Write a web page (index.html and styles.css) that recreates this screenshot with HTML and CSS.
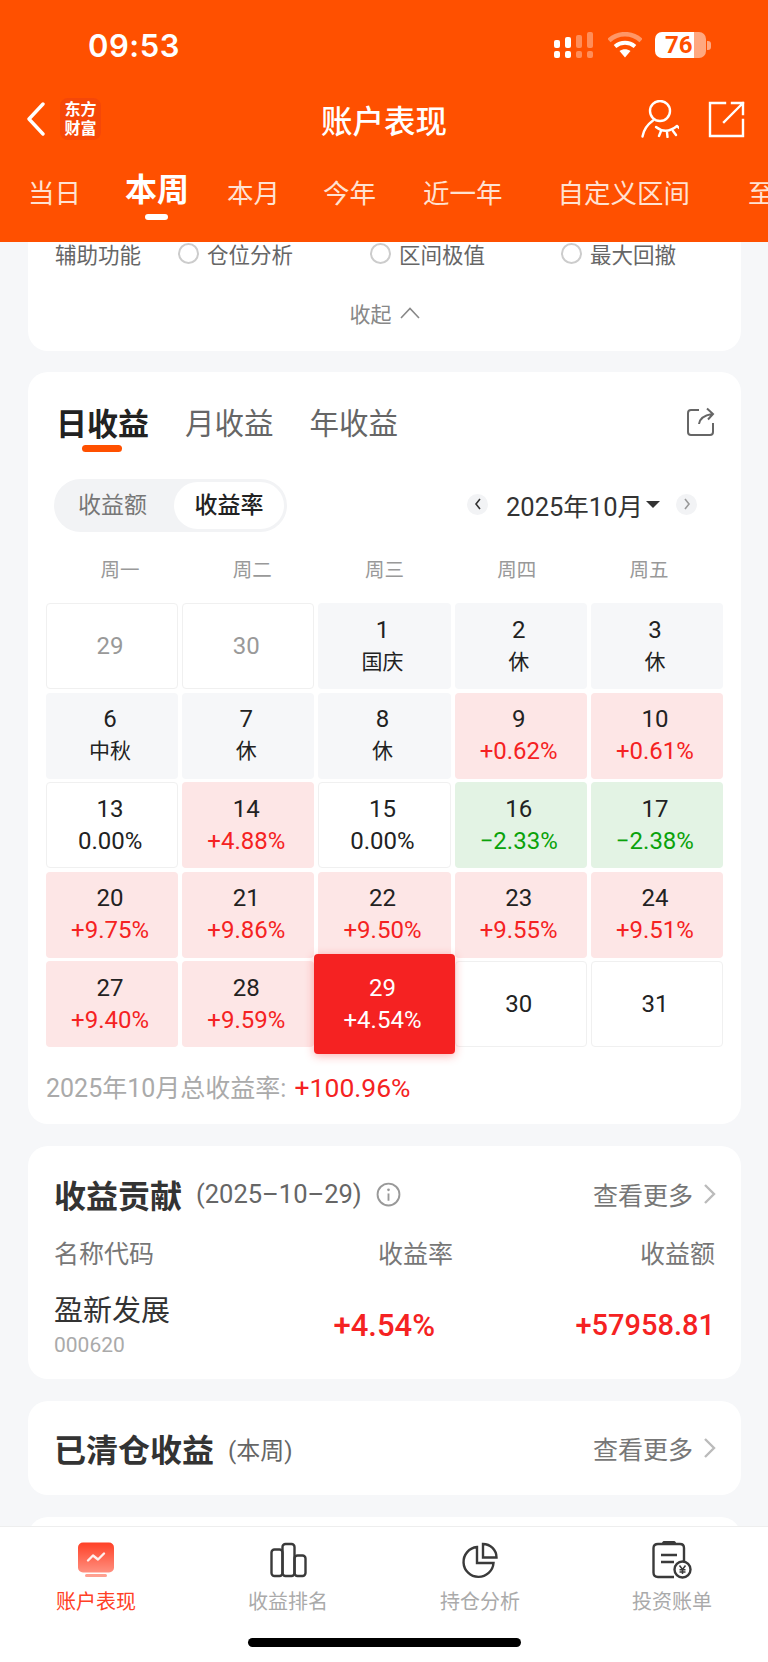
FILE: index.html
```html
<!DOCTYPE html>
<html lang="zh">
<head>
    <meta charset="UTF-8">
    <meta name="viewport" content="width=device-width, initial-scale=1.0">
    <title>账户表现</title>
    <link rel="stylesheet" href="styles.css">
</head>
<body>
<div class="phone">

    <!-- Cabeçalho -->
    <div class="header">
        <div class="status">
            <span class="time">09:53</span>
            <div class="status-icons">
                <svg width="40" height="26" viewBox="0 0 40 26">
                    <g fill="#fff">
                        <rect x="0" y="8" width="6" height="8" rx="2"/>
                        <rect x="11" y="5" width="6" height="11" rx="2"/>
                        <rect x="0" y="19" width="6" height="7" rx="2"/>
                        <rect x="11" y="19" width="6" height="7" rx="2"/>
                    </g>
                    <g fill="#fff" opacity="0.35">
                        <rect x="22" y="3" width="6" height="13" rx="2"/>
                        <rect x="33" y="0" width="6" height="16" rx="2"/>
                        <rect x="22" y="19" width="6" height="7" rx="2"/>
                        <rect x="33" y="19" width="6" height="7" rx="2"/>
                    </g>
                </svg>
                <svg class="wifi" width="34" height="26" viewBox="0 0 34 26">
                    <path d="M1 8.5C10 0 24 0 33 8.5" fill="none" stroke="#fff" stroke-opacity="0.4" stroke-width="4.5"/>
                    <path d="M7 14.5C13 9.5 21 9.5 27 14.5" fill="none" stroke="#fff" stroke-width="4"/>
                    <path d="M11.5 19C15 16.5 19 16.5 22.5 19L17 25.5Z" fill="#fff"/>
                </svg>
                <div class="battery"><div class="battery-body"><span>76</span></div><i></i></div>
            </div>
        </div>
        <div class="nav">
            <svg class="back" width="20" height="34" viewBox="0 0 20 34">
                <path d="M17 2L3 17L17 32" fill="none" stroke="#fff" stroke-width="3.4" stroke-linecap="round" stroke-linejoin="round"/>
            </svg>
            <div class="logo">东方<br>财富</div>
            <div class="nav-title">账户表现</div>
            <svg class="nav-person" width="38" height="38" viewBox="0 0 38 38">
                <g fill="none" stroke="#fff" stroke-width="2.4" stroke-linecap="round">
                    <circle cx="19" cy="11" r="10"/>
                    <path d="M1.5 36.5Q3 27 12 20.5"/>
                    <path d="M15 27Q25 35 36 26"/>
                    <path d="M20 31L18 36M26 32.5L26.500 37M32 31L35 35M36 26L38 28"/>
                </g>
            </svg>
            <svg class="nav-share" width="37" height="37" viewBox="0 0 37 37">
                <g fill="none" stroke="#fff" stroke-width="2.4" stroke-linecap="square">
                    <path d="M17 2H2V35H35V19"/>
                    <path d="M16 21L35 2M24 2H35V13"/>
                </g>
            </svg>
        </div>
        <div class="tabs">
            <span>当日</span>
            <span class="tab-active">本周</span>
            <span>本月</span>
            <span>今年</span>
            <span>近一年</span>
            <span>自定义区间</span>
            <span>至</span>
        </div>
    </div>

    <!-- Conteúdo -->
    <div class="scroll">
        <div class="card card-tools">
            <div class="tools-row">
                <span class="tools-label">辅助功能</span>
                <label class="radio radio-1"><i></i>仓位分析</label>
                <label class="radio radio-2"><i></i>区间极值</label>
                <label class="radio radio-3"><i></i>最大回撤</label>
            </div>
            <div class="collapse">收起
                <svg width="20" height="12" viewBox="0 0 20 12"><path d="M1 11L10 1.500L19 11" fill="none" stroke="#888" stroke-width="1.600"/></svg>
            </div>
        </div>

        <div class="card card-calendar">
            <div class="cal-tabs">
                <span class="cal-tab cal-tab-active">日收益</span>
                <span class="cal-tab">月收益</span>
                <span class="cal-tab">年收益</span>
                <svg class="cal-share" width="30" height="30" viewBox="0 0 30 30">
                    <path d="M13 3H5Q2 3 2 6V25Q2 28 5 28H24Q27 28 27 25V16" fill="none" stroke="#666" stroke-width="2"/>
                    <path d="M13 17Q14 9 26 7M21 1.500L27 7L22 12.500" fill="none" stroke="#666" stroke-width="2"/>
                </svg>
            </div>
            <div class="cal-controls">
                <div class="segment">
                    <span>收益额</span>
                    <span class="segment-active">收益率</span>
                </div>
                <div class="month">
                    <span class="month-btn"><svg width="8" height="12" viewBox="0 0 8 12"><path d="M6 1L2 6L6 11" fill="none" stroke="#333" stroke-width="1.600"/></svg></span>
                    <span class="month-text">2025年10月</span>
                    <i class="month-caret"></i>
                    <span class="month-btn"><svg width="8" height="12" viewBox="0 0 8 12"><path d="M2 1L6 6L2 11" fill="none" stroke="#999" stroke-width="1.600"/></svg></span>
                </div>
            </div>
            <div class="weekdays">
                <span>周一</span><span>周二</span><span>周三</span><span>周四</span><span>周五</span>
            </div>
            <div class="grid">
                <div class="cell cell-empty muted"><b>29</b></div>
                <div class="cell cell-empty muted"><b>30</b></div>
                <div class="cell cell-rest"><b>1</b><span>国庆</span></div>
                <div class="cell cell-rest"><b>2</b><span>休</span></div>
                <div class="cell cell-rest"><b>3</b><span>休</span></div>

                <div class="cell cell-rest"><b>6</b><span>中秋</span></div>
                <div class="cell cell-rest"><b>7</b><span>休</span></div>
                <div class="cell cell-rest"><b>8</b><span>休</span></div>
                <div class="cell cell-up"><b>9</b><span>+0.62%</span></div>
                <div class="cell cell-up"><b>10</b><span>+0.61%</span></div>

                <div class="cell cell-empty"><b>13</b><span>0.00%</span></div>
                <div class="cell cell-up"><b>14</b><span>+4.88%</span></div>
                <div class="cell cell-empty"><b>15</b><span>0.00%</span></div>
                <div class="cell cell-down"><b>16</b><span>−2.33%</span></div>
                <div class="cell cell-down"><b>17</b><span>−2.38%</span></div>

                <div class="cell cell-up"><b>20</b><span>+9.75%</span></div>
                <div class="cell cell-up"><b>21</b><span>+9.86%</span></div>
                <div class="cell cell-up"><b>22</b><span>+9.50%</span></div>
                <div class="cell cell-up"><b>23</b><span>+9.55%</span></div>
                <div class="cell cell-up"><b>24</b><span>+9.51%</span></div>

                <div class="cell cell-up"><b>27</b><span>+9.40%</span></div>
                <div class="cell cell-up"><b>28</b><span>+9.59%</span></div>
                <div class="cell cell-active"><b>29</b><span>+4.54%</span></div>
                <div class="cell cell-empty"><b>30</b></div>
                <div class="cell cell-empty"><b>31</b></div>
            </div>
            <div class="total">2025年10月总收益率: <span>+100.96%</span></div>
        </div>

        <div class="card card-contrib">
            <div class="card-head">
                <span class="card-title">收益贡献</span>
                <span class="card-note">(2025–10–29)</span>
                <svg class="info" width="25" height="25" viewBox="0 0 24 24">
                    <circle cx="12" cy="12" r="10.500" fill="none" stroke="#999" stroke-width="1.800"/>
                    <circle cx="12" cy="7.500" r="1.300" fill="#999"/>
                    <path d="M12 11V18" stroke="#999" stroke-width="1.800"/>
                </svg>
                <span class="more">查看更多<svg width="14" height="22" viewBox="0 0 14 22"><path d="M2 2L11 11L2 20" fill="none" stroke="#bbb" stroke-width="2.400"/></svg></span>
            </div>
            <div class="contrib-cols">
                <span>名称代码</span>
                <span class="col-rate">收益率</span>
                <span class="col-amount">收益额</span>
            </div>
            <div class="contrib-row">
                <div>
                    <div class="stock-name">盈新发展</div>
                    <div class="stock-code">000620</div>
                </div>
                <div class="col-rate up-val">+4.54%</div>
                <div class="col-amount up-val">+57958.81</div>
            </div>
        </div>

        <div class="card card-cleared">
            <div class="card-head">
                <span class="card-title">已清仓收益</span>
                <span class="card-note">(本周)</span>
                <span class="more">查看更多<svg width="14" height="22" viewBox="0 0 14 22"><path d="M2 2L11 11L2 20" fill="none" stroke="#bbb" stroke-width="2.400"/></svg></span>
            </div>
        </div>

        <div class="card card-next"></div>
    </div>

    <!-- Barra inferior -->
    <div class="tabbar">
        <div class="tabbar-item tabbar-active">
            <svg width="36" height="35" viewBox="0 0 36 35">
                <defs>
                    <linearGradient id="grad-monitor" x1="0" y1="0" x2="0" y2="1">
                        <stop offset="0" stop-color="#ff4026"/>
                        <stop offset="1" stop-color="#ff9080"/>
                    </linearGradient>
                </defs>
                <rect x="0" y="0" width="36" height="30" rx="5" fill="url(#grad-monitor)"/>
                <rect x="7" y="31.500" width="22" height="3" rx="1.500" fill="#ffa090"/>
                <path d="M10 18L15 13L20 17L26 11" fill="none" stroke="#fff" stroke-width="2.400" stroke-linecap="round" stroke-linejoin="round" opacity="0.9"/>
            </svg>
            <span>账户表现</span>
        </div>
        <div class="tabbar-item">
            <svg width="37" height="35" viewBox="0 0 37 35">
                <g fill="none" stroke="#3a3a3a" stroke-width="2.400">
                    <rect x="1.500" y="7" width="11" height="26.500" rx="3"/>
                    <rect x="12.500" y="1.500" width="12" height="32" rx="3"/>
                    <rect x="24.500" y="13" width="11" height="20.500" rx="3"/>
                </g>
            </svg>
            <span>收益排名</span>
        </div>
        <div class="tabbar-item">
            <svg width="36" height="35" viewBox="0 0 36 35">
                <g fill="none" stroke="#3a3a3a" stroke-width="2.400">
                    <path d="M15 4.500A15 15 0 1 0 31.500 20.500H15Z"/>
                    <path d="M21 1.500A13.500 13.500 0 0 1 34.500 15H21Z"/>
                </g>
            </svg>
            <span>持仓分析</span>
        </div>
        <div class="tabbar-item">
            <svg width="40" height="38" viewBox="0 0 40 38">
                <g fill="none" stroke="#3a3a3a" stroke-width="2.400">
                    <path d="M22 36H6Q1.500 36 1.500 31.500V7Q1.500 3 6 3H28Q32 3 32 7V20"/>
                    <path d="M11 3Q11 1 13 1H21Q23 1 23 3" />
                    <path d="M9 14H25M9 21H22"/>
                    <circle cx="30.500" cy="28.500" r="8"/>
                </g>
                <path d="M27.500 24.500L30.500 28.500L33.500 24.500M30.500 28.500V33M27.500 28.800H33.500M27.500 31H33.500" fill="none" stroke="#3a3a3a" stroke-width="1.500"/>
            </svg>
            <span>投资账单</span>
        </div>
        <div class="home-bar"></div>
    </div>
</div>
</body>
</html>
```

FILE: styles.css
```css
* {
    margin: 0;
    padding: 0;
    box-sizing: border-box;
    font-family: Roboto, 'Noto Sans CJK SC', sans-serif;
}

body {
    background-color: #f6f7f9;
}

.phone {
    width: 768px;
    height: 1662px;
    display: flex;
    flex-direction: column;
    overflow: hidden;
}

/* Header */
.header {
    height: 242px;
    flex-shrink: 0;
    background-color: #ff5000;
    color: white;
}

.status {
    height: 90px;
    padding: 0 57px 0 88px;
    display: flex;
    justify-content: space-between;
    align-items: center;
}

.time {
    font-family: Inter, sans-serif;
    font-size: 31px;
    font-weight: 600;
    letter-spacing: 0.5px;
}

.status-icons {
    display: flex;
    align-items: center;
}

.wifi {
    margin-left: 14px;
}

.battery {
    margin-left: 13px;
    display: flex;
    align-items: center;
}

.battery-body {
    width: 51px;
    height: 26px;
    border-radius: 7px;
    background: linear-gradient(to right, #fff 76%, rgba(255, 255, 255, 0.5) 76%);
    color: #ff5000;
    font-family: Inter, sans-serif;
    font-size: 24px;
    font-weight: 700;
    line-height: 26px;
    padding-left: 10px;
}

.battery i {
    width: 4px;
    height: 9px;
    margin-left: 1px;
    border-radius: 0 3px 3px 0;
    background-color: rgba(255, 255, 255, 0.5);
}

.nav {
    height: 58px;
    display: flex;
    align-items: center;
    padding-left: 26px;
    position: relative;
}

.logo {
    width: 41px;
    height: 42px;
    margin-left: 14px;
    border-radius: 8px;
    background-color: #f54708;
    font-size: 16px;
    font-weight: 700;
    line-height: 19px;
    padding-top: 2px;
    text-align: center;
}

.nav-title {
    position: absolute;
    left: 0;
    right: 0;
    text-align: center;
    font-size: 31.5px;
    font-weight: 500;
}

.nav-person {
    margin-left: auto;
}

.nav-share {
    margin: 0 23px 0 29px;
}

.tabs {
    display: flex;
    align-items: center;
    height: 94px;
    padding: 0 0 8px 28px;
    white-space: nowrap;
    font-size: 26.5px;
    color: #ffe2d2;
}

.tabs span:nth-child(2) { margin-left: 44px; }
.tabs span:nth-child(3) { margin-left: 38px; }
.tabs span:nth-child(4) { margin-left: 43px; }
.tabs span:nth-child(5) { margin-left: 47px; }
.tabs span:nth-child(6) { margin-left: 55px; }
.tabs span:nth-child(7) { margin-left: 58px; }

.tab-active {
    position: relative;
    color: white;
    font-size: 32px;
    font-weight: 700;
    margin-top: -8px;
}

.tab-active::after {
    content: "";
    position: absolute;
    left: 20px;
    top: 50px;
    width: 23px;
    height: 6px;
    border-radius: 3px;
    background-color: white;
}

/* Cards */
.scroll {
    flex: 1;
    min-height: 0;
    overflow: hidden;
    padding: 0 27px 0 28px;
    display: flex;
    flex-direction: column;
    gap: 22px;
}

.card {
    flex-shrink: 0;
    background-color: white;
    border-radius: 20px;
}

.card-tools {
    height: 109px;
    margin-bottom: -1px;
    border-radius: 0 0 20px 20px;
}

.tools-row {
    height: 26px;
    margin-top: -2px;
    display: flex;
    align-items: center;
    position: relative;
    font-size: 21.5px;
    color: #666;
    padding-left: 27px;
}

.radio {
    display: flex;
    align-items: center;
    position: absolute;
    top: 0;
    height: 26px;
}

.radio i {
    width: 21px;
    height: 21px;
    margin-right: 8px;
    border: 2px solid #ccc;
    border-radius: 50%;
}

.radio-1 { left: 150px; }
.radio-2 { left: 342px; }
.radio-3 { left: 533px; }

.collapse {
    margin-top: 33px;
    height: 28px;
    display: flex;
    justify-content: center;
    align-items: center;
    gap: 8px;
    font-size: 21px;
    color: #888;
}

.card-calendar {
    height: 752px;
    padding: 30px 18px 0;
}

.cal-tabs {
    height: 38px;
    display: flex;
    align-items: center;
    gap: 36px;
    padding-left: 10px;
    font-size: 29.5px;
    color: #666;
}

.cal-tab-active {
    position: relative;
    font-size: 31px;
    font-weight: 700;
    color: #222;
}

.cal-tab-active::after {
    content: "";
    position: absolute;
    left: 26px;
    top: 46px;
    width: 40px;
    height: 7px;
    border-radius: 4px;
    background-color: #ff5000;
}

.cal-share {
    margin: 2px 7px 0 auto;
}

.cal-controls {
    margin-top: 39px;
    height: 53px;
    display: flex;
    justify-content: space-between;
    align-items: center;
    padding: 0 26px 0 8px;
}

.segment {
    width: 233px;
    height: 53px;
    padding: 3px;
    display: flex;
    align-items: center;
    border-radius: 27px;
    background-color: #f2f3f5;
    font-size: 23px;
    color: #777;
}

.segment span {
    flex: 1;
    height: 47px;
    line-height: 47px;
    text-align: center;
    padding-right: 6px;
}

.segment-active {
    flex: 0 0 110px !important;
    padding-right: 0 !important;
    border-radius: 24px;
    background-color: white;
    color: #222;
    font-weight: 500;
}

.month {
    display: flex;
    align-items: center;
    margin-top: -3px;
}

.month-btn {
    width: 21px;
    height: 21px;
    border-radius: 50%;
    background-color: #f2f3f5;
    display: flex;
    justify-content: center;
    align-items: center;
}

.month-text {
    margin-left: 18px;
    font-size: 25.5px;
    color: #333;
}

.month-caret {
    margin: 0 16px 0 3px;
    border-left: 7px solid transparent;
    border-right: 7px solid transparent;
    border-top: 7px solid #333;
}

.weekdays {
    margin-top: 25px;
    height: 28px;
    padding: 0 8px;
    display: grid;
    grid-template-columns: repeat(5, 1fr);
    text-align: center;
    font-size: 19.5px;
    line-height: 28px;
    color: #999;
}

.grid {
    margin-top: 18px;
    display: grid;
    grid-template-columns: repeat(5, 1fr);
    grid-auto-rows: 86px;
    gap: 3.5px 4px;
}

.cell {
    border-radius: 4px;
    display: flex;
    flex-direction: column;
    justify-content: center;
    align-items: center;
    gap: 5px;
    font-size: 24px;
    line-height: 27px;
    color: #222;
    padding-right: 4px;
}

.cell b {
    font-weight: 400;
}

.cell-empty {
    background-color: white;
    border: 1px solid #f0f0f0;
}

.cell-rest {
    background-color: #f6f7f9;
}

.cell-rest span {
    font-size: 21px;
}

.muted {
    color: #999;
}

.cell-up {
    background-color: #fde6e6;
}

.cell-up span {
    color: #f52222;
}

.cell-down {
    background-color: #e3f3e4;
}

.cell-down span {
    color: #0aa20a;
}

.cell-active {
    margin: -7px -4px;
    position: relative;
    z-index: 1;
    background-color: #f52222;
    color: white;
    box-shadow: 0 2px 10px rgba(245, 34, 34, 0.35);
}

.total {
    margin-top: 21px;
    font-size: 25px;
    color: #aaa;
}

.total span {
    margin-left: 2px;
    color: #f52222;
    font-size: 26.5px;
    font-weight: 400;
}

.card-contrib {
    height: 233px;
    padding: 0 26px 0 26px;
}

.card-head {
    height: 96px;
    display: flex;
    align-items: center;
}

.card-title {
    font-size: 32px;
    font-weight: 700;
    color: #333;
}

.card-note {
    margin-left: 14px;
    font-size: 25.5px;
    color: #666;
}

.card-cleared .card-note {
    font-size: 24px;
}

.info {
    margin-left: 14px;
}

.more {
    margin: 0 -2px 0 auto;
    display: flex;
    align-items: center;
    gap: 10px;
    font-size: 25px;
    color: #777;
}

.contrib-cols {
    margin-top: -8px;
    height: 36px;
    display: grid;
    grid-template-columns: 1fr 180px 180px;
    align-items: center;
    font-size: 25px;
    color: #777;
}

.col-rate {
    text-align: right;
    padding-right: 82px;
}

.col-amount {
    text-align: right;
}

.contrib-row {
    margin-top: 21px;
    display: grid;
    grid-template-columns: 1fr 120px 280px;
    align-items: center;
}

.stock-name {
    font-size: 29px;
    line-height: 40px;
    color: #333;
}

.stock-code {
    font-size: 21px;
    line-height: 28px;
    color: #aaa;
}

.up-val {
    font-size: 29px;
    font-weight: 500;
    color: #f52222;
    white-space: nowrap;
}

.contrib-row .col-rate {
    font-size: 31px;
    padding-right: 0;
}

.card-cleared {
    height: 94px;
    padding: 0 26px 0 26px;
}

.card-cleared .card-head {
    height: 94px;
}

.card-next {
    height: 60px;
}

/* Bottom bar */
.tabbar {
    height: 136px;
    flex-shrink: 0;
    position: relative;
    background-color: white;
    border-top: 1px solid #eee;
    display: grid;
    grid-template-columns: repeat(4, 1fr);
    padding-top: 14px;
}

.tabbar-item {
    display: flex;
    flex-direction: column;
    align-items: center;
    font-size: 20px;
    color: #aaa;
}

.tabbar-item svg {
    height: 38px;
}

.tabbar-item span {
    margin-top: 9px;
    line-height: 28px;
}

.tabbar-active {
    color: #ff4026;
}

.home-bar {
    position: absolute;
    left: 248px;
    top: 111px;
    width: 273px;
    height: 9px;
    border-radius: 5px;
    background-color: black;
}
```
